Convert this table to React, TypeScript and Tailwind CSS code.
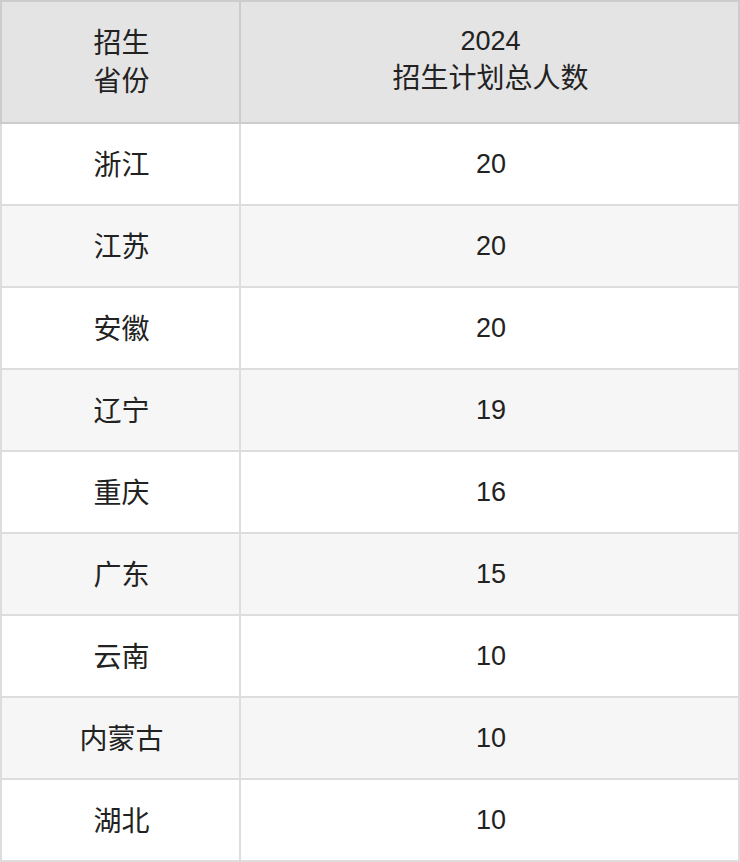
const rows: [string, string][] = [
  ["浙江", "20"],
  ["江苏", "20"],
  ["安徽", "20"],
  ["辽宁", "19"],
  ["重庆", "16"],
  ["广东", "15"],
  ["云南", "10"],
  ["内蒙古", "10"],
  ["湖北", "10"],
];

export default function App() {
  return (
    <main
      className="w-[740px] bg-white text-[27px] leading-[38px] text-[#222]"
      style={{ fontFamily: '"Liberation Sans", "Noto Sans CJK SC", sans-serif' }}
    >
      <div className="flex h-[124px] border-2 border-[#ccc] bg-[#e4e4e4] text-center">
        <div className="flex w-[239px] flex-col items-center justify-center border-r-2 border-[#ccc] pt-[2px] pl-[2px] text-[28px]">
          <span>招生</span>
          <span>省份</span>
        </div>
        <div className="flex flex-1 flex-col items-center justify-center pl-[2px]">
          <span className="-mt-1">2024</span>
          <span className="text-[28px]">招生计划总人数</span>
        </div>
      </div>
      {rows.map(([prov, num], i) => (
        <div
          key={prov}
          className={`flex h-[82px] border-x-2 border-b-2 border-[#ddd] ${
            i % 2 === 1 ? "bg-[#f6f6f6]" : "bg-white"
          }`}
        >
          <div className="flex w-[239px] items-center justify-center border-r-2 border-[#ddd] pt-[3px] pl-[2px] text-[28px]">
            {prov}
          </div>
          <div className="flex flex-1 items-center justify-center pl-[3px]">{num}</div>
        </div>
      ))}
    </main>
  );
}
